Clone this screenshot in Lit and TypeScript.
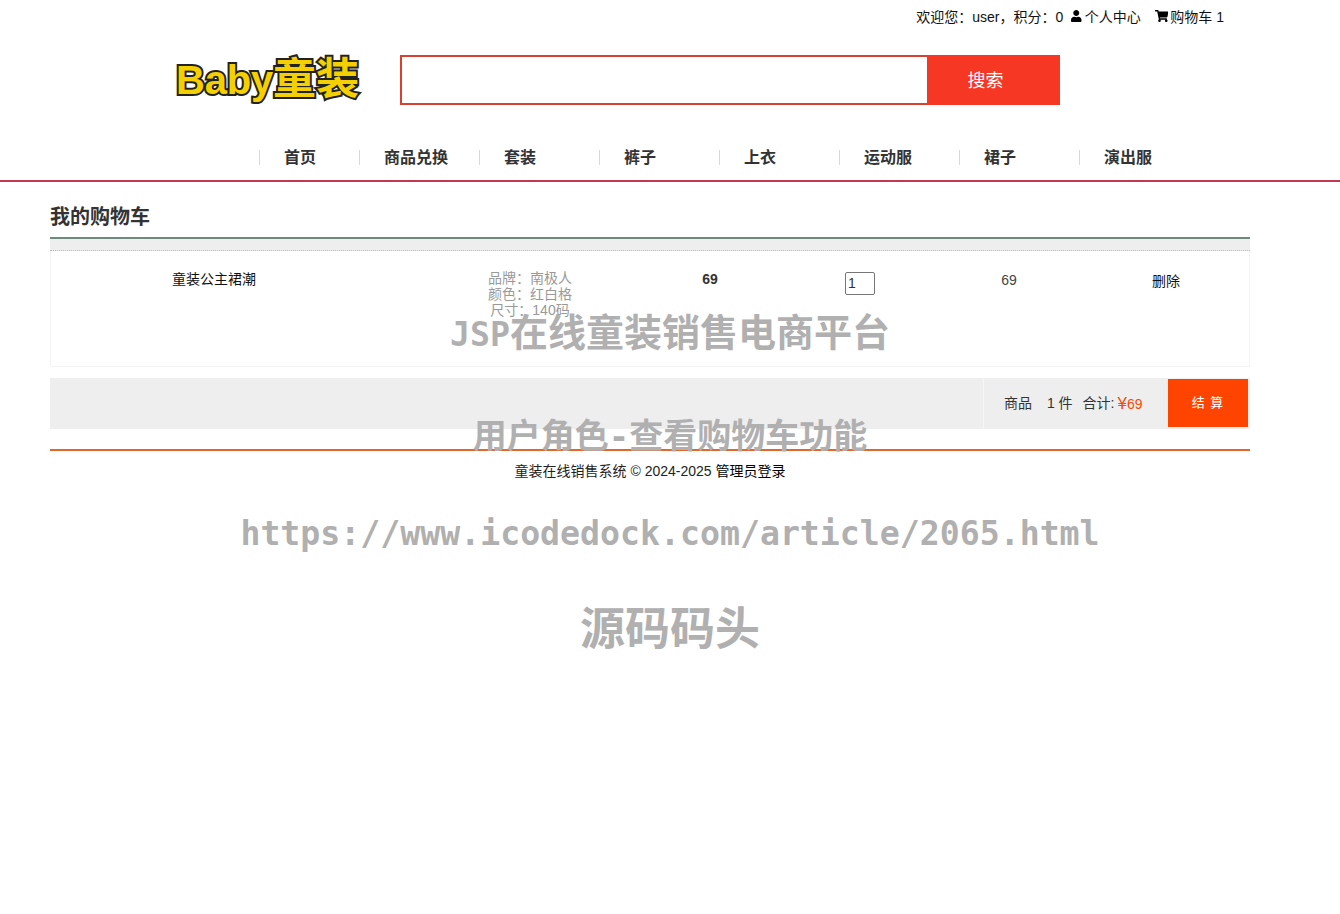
import { LitElement, html, css } from "lit";
import { customElement } from "lit/decorators.js";

const NAV = ["首页", "商品兑换", "套装", "裤子", "上衣", "运动服", "裙子", "演出服"];

@customElement("app-root")
export class AppRoot extends LitElement {
  static styles = css`
    :host {
      display: block;
      position: relative;
      min-height: 914px;
      background: #fff;
      font-family: "Liberation Sans", "Noto Sans CJK SC", sans-serif;
      font-size: 14px;
      color: #333;
    }
    .top {
      height: 32px;
      box-sizing: border-box;
      display: flex;
      justify-content: flex-end;
      align-items: center;
      padding-right: 116px;
      padding-bottom: 1px;
      color: #111;
      white-space: pre;
    }
    .top svg { height: 12px; width: auto; fill: #000; margin-right: 3px; }
    .top .u { margin-left: 8px; display: flex; align-items: center; }
    .top .c { margin-left: 14px; display: flex; align-items: center; }
    .top .c svg { margin-right: 2px; }
    .mast {
      display: flex;
      align-items: flex-start;
      padding: 23px 0 0 176px;
      height: 118px;
      box-sizing: border-box;
    }
    .logo {
      width: 224px;
      height: 48px;
      line-height: 49px;
      font-weight: 700;
      font-size: 40px;
      color: #f5d000;
      -webkit-text-stroke: 4px #222;
      paint-order: stroke fill;
      white-space: nowrap;
      letter-spacing: -0.2px;
    }
    .logo span { font-size: 43px; letter-spacing: 0; }
    .search {
      display: flex;
      width: 660px;
      height: 50px;
      box-sizing: border-box;
      border: 2px solid #d8402f;
    }
    .search .in { flex: 1; }
    .search .btn {
      width: 133px;
      box-sizing: border-box;
      margin: -2px;
      margin-left: 0;
      padding: 0 16px 3px 0;
      background: #f53724;
      color: #fff;
      font-size: 18px;
      display: flex;
      align-items: center;
      justify-content: center;
    }
    nav {
      height: 32px;
      box-sizing: border-box;
      padding-left: 259px;
      display: flex;
      align-items: flex-start;
      border-bottom: 2px solid #c23a50;
    }
    nav a {
      width: 120px;
      box-sizing: border-box;
      height: 15px;
      line-height: 15px;
      border-left: 1px solid #d8d8d8;
      padding-left: 24px;
      font-size: 16px;
      font-weight: 700;
      color: #333;
    }
    nav a:first-child { width: 100px; }
    .main { width: 1200px; margin-left: 50px; }
    h1 {
      margin: 0;
      height: 55px;
      box-sizing: border-box;
      padding-top: 22px;
      line-height: 26px;
      font-size: 20px;
      font-weight: 700;
      color: #333;
    }
    .thead {
      height: 14px;
      box-sizing: border-box;
      background: #eee;
      border-top: 2px solid #6f8a7d;
      border-bottom: 1px dotted #bbb;
    }
    .row {
      height: 116px;
      box-sizing: border-box;
      border: 1px solid #f3f3f3;
      border-top: none;
      display: grid;
      grid-template-columns: 326px 306px 54px 246px 52px 62px 138px;
      justify-items: center;
      align-items: start;
      text-align: center;
    }
    .name { color: #111; margin-top: 20px; line-height: 16px; }
    .spec { color: #999; margin-top: 19px; line-height: 16px; }
    .price { font-weight: 700; font-size: 14px; margin-top: 20px; line-height: 16px; }
    .qty {
      margin-top: 21px;
      width: 30px;
      height: 23px;
      box-sizing: border-box;
      border: 1px solid #767676;
      border-radius: 2px;
      padding-left: 2px;
      text-align: left;
      font-size: 14px;
      line-height: 21px;
      color: #333;
    }
    .total { margin-top: 21px; line-height: 16px; font-size: 14px; color: #444; }
    .del { grid-column: 7; margin-top: 22px; line-height: 16px; color: #111; }
    .bar {
      margin-top: 11px;
      height: 51px;
      display: flex;
      background: #eee;
    }
    .sum {
      margin-left: 933px;
      flex: 1;
      border-left: 1px solid #f6f6f6;
      display: flex;
      align-items: center;
      padding-left: 20px;
      white-space: pre;
    }
    .sum .lab { flex: 1; display: flex; align-items: baseline; padding-bottom: 2px; }
    .sum .t { margin-left: 11px; }
    .sum .a { margin-left: 10px; }
    .sum .m { color: #f40; font-size: 14px; margin-left: 3px; position: relative; top: 1px; }
    .sum .m i { font-style: normal; font-size: 17px; }
    .pay {
      width: 80px;
      height: 48px;
      padding-bottom: 3px;
      box-sizing: border-box;
      margin: 1px 2px 2px 0;
      background: #f40;
      color: #fff;
      font-size: 13px;
      letter-spacing: 1px;
      display: flex;
      align-items: center;
      justify-content: center;
    }
    .foot {
      margin-top: 20px;
      border-top: 2px solid #e2672c;
      padding-top: 12px;
      text-align: center;
      line-height: 16px;
      color: #222;
    }
    .foot b { font-weight: 400; color: #000; }
    .wm {
      position: absolute;
      inset: 0;
      pointer-events: none;
      color: #b0b0b0;
      font-weight: 700;
      text-align: center;
      white-space: nowrap;
      font-family: "DejaVu Sans Mono", "Noto Sans CJK SC", monospace;
    }
    .wm div { position: absolute; left: 0; right: 0; }
    .w1 { top: 305px; font-size: 38px; line-height: 56px; }
    .w1 span, .w3 { font-size: 33.2px; }
    .w2 { top: 408px; font-size: 34px; line-height: 56px; }
    .w3 { top: 506px; line-height: 56px; }
    .w4 { top: 599px; font-size: 45px; line-height: 62px; }
  `;

  render() {
    return html`
      <div class="top">欢迎您：user，积分：0<span class="u"><svg viewBox="0 0 448 512"><path d="M224 256c70.7 0 128-57.3 128-128S294.7 0 224 0 96 57.3 96 128s57.3 128 128 128zm89.6 32h-16.7c-22.2 10.2-46.9 16-72.9 16s-50.6-5.8-72.9-16h-16.7C60.2 288 0 348.2 0 422.4V464c0 26.5 21.5 48 48 48h352c26.5 0 48-21.5 48-48v-41.6c0-74.2-60.2-134.4-134.4-134.4z"/></svg>个人中心</span><span class="c"><svg viewBox="0 0 576 512"><path d="M528.12 301.319l47.273-208C578.806 78.301 567.391 67 551.99 67H159.208l-9.166-44.81C147.758 10.021 137.93 0 125.5 0H24C10.745 0 0 10.745 0 24v16c0 13.255 10.745 24 24 24h69.883l70.248 343.435C147.325 417.1 136 435.222 136 456c0 30.928 25.072 56 56 56s56-25.072 56-56c0-15.674-6.447-29.835-16.824-40h209.647C430.447 426.165 424 440.326 424 456c0 30.928 25.072 56 56 56s56-25.072 56-56c0-22.172-12.888-41.332-31.579-50.405l5.517-24.276c3.413-15.018-8.002-29.319-23.403-29.319H218.117l-6.545-32h293.145c11.206 0 20.92-7.754 23.403-18.681z"/></svg>购物车 1</span></div>
      <div class="mast">
        <div class="logo">Baby<span>童装</span></div>
        <div class="search"><div class="in"></div><div class="btn">搜索</div></div>
      </div>
      <nav>${NAV.map((n) => html`<a>${n}</a>`)}</nav>
      <div class="main">
        <h1>我的购物车</h1>
        <div class="thead"></div>
        <div class="row">
          <div class="name">童装公主裙潮</div>
          <div class="spec">品牌：南极人<br />颜色：红白格<br />尺寸：140码</div>
          <div class="price">69</div>
          <div class="qty">1</div>
          <div class="total">69</div>
          <div class="del">删除</div>
        </div>
        <div class="bar">
          <div class="sum">
            <div class="lab">商品<span class="t"> 1 件</span><span class="a">合计:</span><span class="m"><i>¥</i>69</span></div>
            <div class="pay">结 算</div>
          </div>
        </div>
        <div class="foot">童装在线销售系统 © 2024-2025 <b>管理员登录</b></div>
      </div>
      <div class="wm">
        <div class="w1"><span>JSP</span>在线童装销售电商平台</div>
        <div class="w2">用户角色-查看购物车功能</div>
        <div class="w3">https://www.icodedock.com/article/2065.html</div>
        <div class="w4">源码码头</div>
      </div>
    `;
  }
}
